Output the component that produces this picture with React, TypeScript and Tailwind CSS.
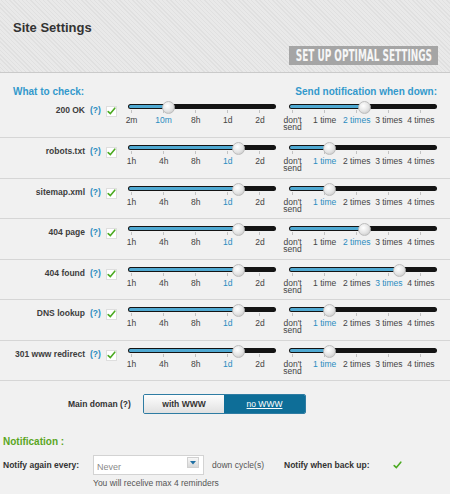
import React from "react";

type Row = { label: string; a: number; b: number; aLabels: string[]; h: string };

const leftDefault = ["1h", "4h", "8h", "1d", "2d"];
const rightLabels = ["don't\nsend", "1 time", "2 times", "3 times", "4 times"];

const rows: Row[] = [
  { label: "200 OK", a: 1, b: 2, aLabels: ["2m", "10m", "8h", "1d", "2d"], h: "h-[41px]" },
  { label: "robots.txt", a: 3, b: 1, aLabels: leftDefault, h: "h-[41px]" },
  { label: "sitemap.xml", a: 3, b: 1, aLabels: leftDefault, h: "h-[40px]" },
  { label: "404 page", a: 3, b: 2, aLabels: leftDefault, h: "h-[41px]" },
  { label: "404 found", a: 3, b: 3, aLabels: leftDefault, h: "h-[40px]" },
  { label: "DNS lookup", a: 3, b: 1, aLabels: leftDefault, h: "h-[41px]" },
  { label: "301 www redirect", a: 3, b: 1, aLabels: leftDefault, h: "h-[40px]" },
];

function Check() {
  return (
    <svg width="9" height="8" viewBox="0 0 9 8">
      <path d="M1.2 4.6 L3.4 6.6 L7.8 1.2" fill="none" stroke="#4caa22" strokeWidth="1.6" strokeLinecap="round" strokeLinejoin="round" />
    </svg>
  );
}

function Checkbox() {
  return (
    <div className="flex h-[11px] w-[11px] items-center justify-center border border-[#dedede] bg-white">
      <Check />
    </div>
  );
}

function Slider({ labels, value }: { labels: string[]; value: number }) {
  const pos = 5 + 35 * value;
  return (
    <div className="w-[148px] pt-[7px]">
      <div className="relative h-[5px] rounded-full bg-[#141414]">
        <div className="absolute left-[1px] top-[1px] h-[3px] rounded-full bg-[#4fa9d2]" style={{ width: pos - 1 }} />
        <div
          className="absolute top-[-3px] h-[13px] w-[13px] rounded-full border border-[#bdbdbd] bg-[radial-gradient(circle_at_40%_35%,#ffffff,#e3e3e3_55%,#bcbcbc)]"
          style={{ left: pos - 6.5 }}
        />
      </div>
      <div className="-ml-[12.5px] flex">
        {labels.map((l, i) => (
          <div key={i} className="flex w-[35px] flex-col items-center">
            <div className="mt-[1px] h-[3px] w-px bg-[#c2c2c2]" />
            <div
              className={
                i === value
                  ? "mt-[4px] whitespace-pre text-center text-[8.5px] leading-[7px] text-[#2a8cc0]"
                  : "mt-[4px] whitespace-pre text-center text-[8.5px] leading-[7px] text-[#444444]"
              }
            >
              {l}
            </div>
          </div>
        ))}
      </div>
    </div>
  );
}

export default function App() {
  return (
    <div className="min-h-[494px] w-[450px] bg-[#f1f1f1] font-[family-name:'Liberation_Sans',Arial,sans-serif] text-[#444]">
      {/* Header */}
      <div className="h-[73px] border-b border-[#cacaca] bg-[repeating-linear-gradient(45deg,#e0e0e0_0_1px,#e9e9e9_1px_3px)] px-[13px] pt-[20px]">
        <div className="text-[13px] font-bold leading-[15px] text-[#333]">Site Settings</div>
        <div className="mt-[11px] flex justify-end">
          <div className="-mr-[1px] flex h-[19px] w-[149px] items-center justify-center overflow-hidden bg-[#a5a5a5]">
            <span className="inline-block scale-x-[0.62] whitespace-nowrap font-[family-name:'DejaVu_Sans_Condensed','DejaVu_Sans',sans-serif] text-[16px] font-semibold leading-[19px] text-[#f6f6f6]">
              SET UP OPTIMAL SETTINGS
            </span>
          </div>
        </div>
      </div>

      {/* Column headings */}
      <div className="flex justify-between px-[13px] pt-[13px] text-[10px] font-bold leading-[11px] text-[#3399cc]">
        <span>What to check:</span>
        <span>Send notification when down:</span>
      </div>

      {/* Rows */}
      {rows.map((r) => (
        <div key={r.label} className={`flex items-start border-b border-[#d6d6d6] ${r.h}`}>
          <div className="w-[85px] whitespace-nowrap pt-[8px] text-right text-[8.5px] font-bold leading-[10px] text-[#3d3d3d]">
            {r.label}
          </div>
          <div className="ml-[5px] w-[11px] whitespace-nowrap pt-[8px] text-[8.5px] font-bold leading-[10px] text-[#2a8cc0]">(?)</div>
          <div className="ml-[5px] mt-[8.5px]">
            <Checkbox />
          </div>
          <div className="ml-[11px]">
            <Slider labels={r.aLabels} value={r.a} />
          </div>
          <div className="ml-[13px]">
            <Slider labels={rightLabels} value={r.b} />
          </div>
        </div>
      ))}

      {/* Main domain */}
      <div className="flex items-center pl-[68px] pt-[13px]">
        <span className="w-[75px] whitespace-nowrap text-[8.5px] font-bold text-[#333]">Main doman (?)</span>
        <div className="flex h-[20px] overflow-hidden rounded-[2px] border border-[#2e7ca3]">
          <div className="flex w-[80px] items-center justify-center bg-[linear-gradient(#fdfdfd,#e1e1e1)] text-[8.5px] font-bold text-[#333]">
            with WWW
          </div>
          <div className="flex w-[81px] items-center justify-center bg-[#0e6e98] text-[8.5px] text-white underline">
            no WWW
          </div>
        </div>
      </div>

      {/* Notification */}
      <div className="mt-[22px] pl-[3px] text-[10px] font-bold leading-[12px] text-[#5aa61f]">Notification :</div>
      <div className="mt-[7px] flex items-center">
        <div className="w-[93px] whitespace-nowrap pl-[3px] text-[8.5px] font-bold text-[#333]">Notify again every:</div>
        <div className="flex h-[20px] w-[111px] items-start justify-between border border-[#d3d3d3] bg-white pl-[3px] pr-[4px]">
          <span className="mt-[6px] text-[9px] leading-[10px] text-[#8a8a8a]">Never</span>
          <div className="mt-[1px] flex h-[11px] w-[12px] items-center justify-center border border-[#d0d0d0] bg-[linear-gradient(#f7f7f7,#d8d8d8)]">
            <svg width="6" height="4" viewBox="0 0 6 4">
              <path d="M0 0 L6 0 L3 3.5 Z" fill="#1f6fa3" />
            </svg>
          </div>
        </div>
        <div className="ml-[8px] w-[72px] whitespace-nowrap text-[8.5px] text-[#555]">down cycle(s)</div>
        <div className="w-[109px] whitespace-nowrap text-[8.5px] font-bold text-[#333]">Notify when back up:</div>
        <Check />
      </div>
      <div className="mt-[3px] pb-[6px] pl-[93px] text-[8.5px] leading-[10px] text-[#555]">You will recelive max 4 reminders</div>
    </div>
  );
}
